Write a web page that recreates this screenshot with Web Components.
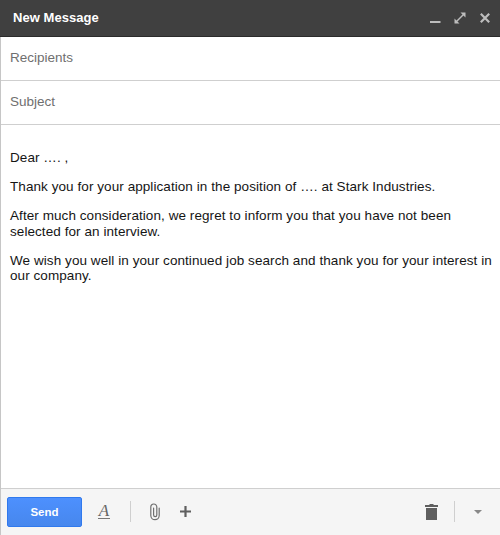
<!DOCTYPE html>
<html lang="en">
<head>
<meta charset="utf-8">
<title>New Message</title>
<style>
    body {
        margin: 0;
        background: #fff;
        font-family: "Liberation Sans", Arial, sans-serif;
    }
</style>
</head>
<body>
<compose-window>
    <title-bar slot="header">New Message</title-bar>
    <compose-field slot="fields">Recipients</compose-field>
    <compose-field slot="fields">Subject</compose-field>
    <message-body>
        <message-line>Dear …. ,</message-line>
        <message-line>Thank you for your application in the position of …. at Stark Industries.</message-line>
        <message-line>After much consideration, we regret to inform you that you have not been<br>selected for an interview.</message-line>
        <message-line>We wish you well in your continued job search and thank you for your interest in<br>our company.</message-line>
    </message-body>
    <compose-toolbar slot="footer">Send</compose-toolbar>
</compose-window>

<script>
class ComposeWindow extends HTMLElement {
    constructor() {
        super();
        this.attachShadow({ mode: 'open' });
        this.shadowRoot.innerHTML = `
            <style>
                :host {
                    display: flex;
                    flex-direction: column;
                    height: 535px;
                    overflow: hidden;
                    background: #fff;
                }

                #content {
                    flex: 1;
                    display: flex;
                    flex-direction: column;
                    border-left: 1px solid #c6c6c6;
                }
            </style>
            <slot name="header"></slot>
            <div id="content">
                <slot name="fields"></slot>
                <slot></slot>
                <slot name="footer"></slot>
            </div>
        `;
    }
}

class TitleBar extends HTMLElement {
    constructor() {
        super();
        this.attachShadow({ mode: 'open' });
        this.shadowRoot.innerHTML = `
            <style>
                :host {
                    display: flex;
                    align-items: center;
                    justify-content: space-between;
                    box-sizing: border-box;
                    height: 37px;
                    padding: 0 9px 1px 13px;
                    background: #404040;
                    border-bottom: 1px solid #2b2b2b;
                    color: #fff;
                    font-size: 13px;
                    font-weight: bold;
                    letter-spacing: 0.05px;
                }

                #icons {
                    display: flex;
                    gap: 13px;
                }

                svg {
                    display: block;
                    width: 12px;
                    height: 12px;
                    fill: #bdbdbd;
                }
            </style>
            <span><slot></slot></span>
            <div id="icons">
                <svg viewBox="0 0 12 12"><path d="M1 9h10.500v2H1z"/></svg>
                <svg viewBox="0 0 12 12"><path d="M6.500.5h5v5zM.5 6.500l5 5h-5z"/><path d="M2.500 9.500l7-7" stroke="#bdbdbd" stroke-width="1.500"/></svg>
                <svg viewBox="0 0 12 12"><path d="M1.800 1.800l8.400 8.400M10.200 1.800l-8.400 8.400" stroke="#bdbdbd" stroke-width="2.200"/></svg>
            </div>
        `;
    }
}

class ComposeField extends HTMLElement {
    constructor() {
        super();
        this.attachShadow({ mode: 'open' });
        this.shadowRoot.innerHTML = `
            <style>
                :host {
                    display: flex;
                    align-items: center;
                    box-sizing: border-box;
                    height: 44px;
                    padding: 0 9px 2px;
                    border-bottom: 1px solid #cfcfcf;
                    color: #6f6f6f;
                    font-size: 13.5px;
                }
            </style>
            <slot></slot>
        `;
    }
}

class MessageBody extends HTMLElement {
    constructor() {
        super();
        this.attachShadow({ mode: 'open' });
        this.shadowRoot.innerHTML = `
            <style>
                :host {
                    display: flex;
                    flex: 1;
                    flex-direction: column;
                    gap: 14px;
                    padding: 25px 0 0 9px;
                    color: #151515;
                    font-size: 13.5px;
                    line-height: 15.2px;
                    white-space: nowrap;
                }
            </style>
            <slot></slot>
        `;
    }
}

class MessageLine extends HTMLElement {
    constructor() {
        super();
        this.attachShadow({ mode: 'open' });
        this.shadowRoot.innerHTML = `
            <style>
                :host {
                    display: block;
                    letter-spacing: 0.07px;
                }
            </style>
            <slot></slot>
        `;
    }
}

class ComposeToolbar extends HTMLElement {
    constructor() {
        super();
        this.attachShadow({ mode: 'open' });
        this.shadowRoot.innerHTML = `
            <style>
                :host {
                    display: flex;
                    align-items: center;
                    box-sizing: border-box;
                    height: 47px;
                    padding: 0 18px 1px 6px;
                    background: #f5f5f5;
                    border-top: 1px solid #cfcfcf;
                }

                button {
                    width: 75px;
                    height: 30px;
                    padding: 0;
                    border: 1px solid #3079ed;
                    border-radius: 2px;
                    background: linear-gradient(#4d90fe, #4787ed);
                    color: #fff;
                    font: bold 11.5px "Liberation Sans", Arial, sans-serif;
                }

                #format {
                    width: 12px;
                    margin-left: 16px;
                    border-bottom: 1px solid #777;
                    color: #666;
                    font: italic 17px/14px "Liberation Serif", serif;
                    text-align: center;
                }

                .divider {
                    width: 1px;
                    height: 21px;
                    background: #cfcfcf;
                }

                svg {
                    display: block;
                    fill: #5f5f5f;
                }

                #clip {
                    margin-left: 19px;
                    fill: none;
                    stroke: #707070;
                    stroke-width: 1.2;
                    stroke-linecap: round;
                }

                #plus {
                    margin-left: 19px;
                }

                #trash {
                    margin-left: auto;
                }
            </style>
            <button><slot></slot></button>
            <span id="format">A</span>
            <span class="divider" style="margin-left: 20px"></span>
            <svg id="clip" width="11" height="18" viewBox="0 0 11 18"><path d="M9.200 5v7.500a4.200 4.200 0 0 1-8.400 0V4a3 3 0 0 1 6 0v8a1.600 1.600 0 0 1-3.200 0V5"/></svg>
            <svg id="plus" width="11" height="11" viewBox="0 0 11 11"><path d="M4.400 0h2.200v4.400H11v2.200H6.600V11H4.400V6.600H0V4.400h4.400z"/></svg>
            <svg id="trash" width="13" height="16" viewBox="0 0 13 16"><path d="M4.500 0h4v1H13v2H0V1h4.500zM1 4h11v12H1z"/></svg>
            <span class="divider" style="margin-left: 16px"></span>
            <svg id="more" style="margin-left: 19px" width="8" height="4" viewBox="0 0 8 4"><path fill="#888" d="M0 0h8L4 4z"/></svg>
        `;
    }
}

customElements.define('compose-window', ComposeWindow);
customElements.define('title-bar', TitleBar);
customElements.define('compose-field', ComposeField);
customElements.define('message-body', MessageBody);
customElements.define('message-line', MessageLine);
customElements.define('compose-toolbar', ComposeToolbar);
</script>
</body>
</html>
